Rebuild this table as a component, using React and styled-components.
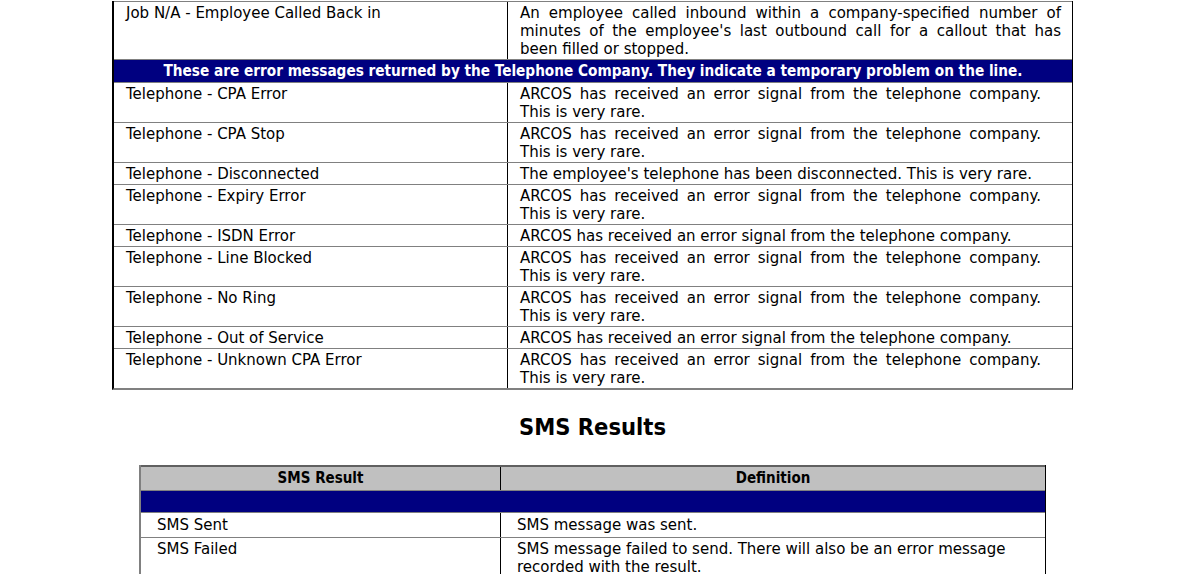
import styled, { createGlobalStyle } from "styled-components";

const GlobalStyle = createGlobalStyle`
  body {
    margin: 0;
    background: #fff;
    color: #000;
    font-family: "DejaVu Sans", sans-serif;
    font-size: 15px;
    line-height: 18px;
  }
`;

const Page = styled.div`
  padding: 1px 0 0 5px;
  display: flex;
  flex-direction: column;
  align-items: center;
`;

const ResultTable = styled.div`
  width: ${(p) => p.width}px;
  border-left: 2px solid ${(p) => p.edge || "#000"};
  border-right: 1px solid #000;
  border-bottom: 2px solid #808080;
  box-sizing: border-box;
`;

const Row = styled.div`
  display: grid;
  grid-template-columns: ${(p) => p.split}px 1fr;
  border-top: 1px solid #808080;
`;

const NameCell = styled.div`
  padding: ${(p) => p.pad || "2px 12px 1px"};
  border-right: 1px solid #000;
  white-space: nowrap;
`;

const DefCell = styled.div`
  padding: ${(p) => p.pad || "2px 11px 1px 12px"};
  min-width: 0;
`;

const Line = styled.div`
  white-space: nowrap;
  text-align: ${(p) => (p.spread ? "justify" : "left")};
  text-align-last: ${(p) => (p.spread ? "justify" : "auto")};
  width: ${(p) => (p.w ? `${p.w}px` : "auto")};
`;

const Band = styled.div`
  background: #000080;
  color: #fff;
  font-family: "DejaVu Sans Condensed", "DejaVu Sans", sans-serif;
  font-stretch: condensed;
  font-size: 15.2px;
  font-weight: bold;
  text-align: center;
  height: ${(p) => p.h}px;
  line-height: ${(p) => p.h}px;
  border-top: 1px solid #808080;
  white-space: nowrap;
`;

const Heading = styled.h2`
  margin: 21px 0 22px;
  font-family: "DejaVu Sans Condensed", "DejaVu Sans", sans-serif;
  font-stretch: condensed;
  font-size: 23.5px;
  line-height: 32px;
  font-weight: bold;
  text-align: center;
`;

const HeadRow = styled.div`
  display: grid;
  grid-template-columns: ${(p) => p.split}px 1fr;
  background: #c0c0c0;
  border-top: 2px solid #606060;
  font-family: "DejaVu Sans Condensed", "DejaVu Sans", sans-serif;
  font-stretch: condensed;
  font-size: 15px;
  font-weight: bold;
  text-align: center;
`;

const HeadCell = styled.div`
  padding: 2px 0 3px;
  border-right: ${(p) => (p.last ? "none" : "1px solid #000")};
`;

const RARE = "This is very rare.";
const SIGNAL = "ARCOS has received an error signal from the telephone company.";

const phoneRows = [
  { name: "Telephone - CPA Error", two: true },
  { name: "Telephone - CPA Stop", two: true },
  { name: "Telephone - Disconnected", text: "The employee's telephone has been disconnected. This is very rare." },
  { name: "Telephone - Expiry Error", two: true },
  { name: "Telephone - ISDN Error", text: SIGNAL },
  { name: "Telephone - Line Blocked", two: true },
  { name: "Telephone - No Ring", two: true },
  { name: "Telephone - Out of Service", text: SIGNAL },
  { name: "Telephone - Unknown CPA Error", two: true },
];

export default function App() {
  return (
    <Page>
      <GlobalStyle />
      <ResultTable width={961}>
        <Row split={394}>
          <NameCell>Job N/A - Employee Called Back in</NameCell>
          <DefCell>
            <Line spread>An employee called inbound within a company-specified number of</Line>
            <Line spread>minutes of the employee's last outbound call for a callout that has</Line>
            <Line>been filled or stopped.</Line>
          </DefCell>
        </Row>
        <Band h={22}>
          These are error messages returned by the Telephone Company. They indicate a temporary problem on the line.
        </Band>
        {phoneRows.map((r) => (
          <Row split={394} key={r.name}>
            <NameCell>{r.name}</NameCell>
            <DefCell>
              {r.two ? (
                <>
                  <Line spread w={521}>{SIGNAL}</Line>
                  <Line>{RARE}</Line>
                </>
              ) : (
                <Line>{r.text}</Line>
              )}
            </DefCell>
          </Row>
        ))}
      </ResultTable>

      <Heading>SMS Results</Heading>

      <ResultTable width={907} edge="#808080">
        <HeadRow split={360}>
          <HeadCell>SMS Result</HeadCell>
          <HeadCell last>Definition</HeadCell>
        </HeadRow>
        <Band h={21} />
        <Row split={360}>
          <NameCell pad="3px 16px 3px">SMS Sent</NameCell>
          <DefCell pad="3px 16px 3px">SMS message was sent.</DefCell>
        </Row>
        <Row split={360}>
          <NameCell pad="2px 16px 1px">SMS Failed</NameCell>
          <DefCell pad="2px 16px 1px">
            <Line>SMS message failed to send. There will also be an error message</Line>
            <Line>recorded with the result.</Line>
          </DefCell>
        </Row>
      </ResultTable>
    </Page>
  );
}
